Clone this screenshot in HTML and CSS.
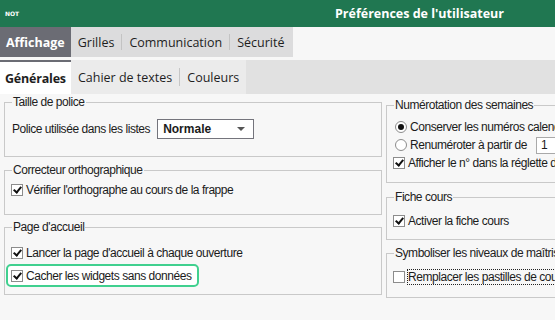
FILE: index.html
```html
<!DOCTYPE html>
<html lang="fr">
<head>
  <meta charset="UTF-8">
  <meta name="viewport" content="width=device-width, initial-scale=1.0">
  <title>Préférences de l'utilisateur</title>
  <link rel="stylesheet" href="styles.css">
</head>
<body>
  <header class="titlebar">
    <span class="logo">NOT</span>
    <h1 class="title">Préférences de l'utilisateur</h1>
  </header>

  <nav class="tabs main-tabs">
    <span class="tab active">Affichage</span>
    <span class="tab">Grilles</span>
    <span class="sep"></span>
    <span class="tab">Communication</span>
    <span class="sep"></span>
    <span class="tab">Sécurité</span>
  </nav>

  <nav class="tabs sub-tabs">
    <span class="tab active">Générales</span>
    <span class="tab">Cahier de textes</span>
    <span class="sep"></span>
    <span class="tab">Couleurs</span>
  </nav>

  <main class="panes">
    <div class="column left">
      <fieldset class="group g-font">
        <legend>Taille de police</legend>
        <div class="row">
          <span>Police utilisée dans les listes</span>
          <div class="select">Normale<span class="caret"></span></div>
        </div>
      </fieldset>

      <fieldset class="group g-spell">
        <legend>Correcteur orthographique</legend>
        <div class="row"><span class="check on"></span>Vérifier l'orthographe au cours de la frappe</div>
      </fieldset>

      <fieldset class="group g-home">
        <legend>Page d'accueil</legend>
        <div class="row tall"><span class="check on"></span>Lancer la page d'accueil à chaque ouverture</div>
        <div class="row tall highlight"><span class="check on"></span>Cacher les widgets sans données</div>
      </fieldset>
    </div>

    <div class="column right">
      <fieldset class="group g-weeks">
        <legend>Numérotation des semaines</legend>
        <div class="row"><span class="radio on"></span>Conserver les numéros calendaires</div>
        <div class="row"><span class="radio"></span>Renuméroter à partir de<span class="input">1</span></div>
        <div class="row"><span class="check on"></span>Afficher le n° dans la réglette du planning</div>
      </fieldset>

      <fieldset class="group g-card">
        <legend>Fiche cours</legend>
        <div class="row"><span class="check on"></span>Activer la fiche cours</div>
      </fieldset>

      <fieldset class="group g-levels">
        <legend>Symboliser les niveaux de maîtrise</legend>
        <div class="row"><span class="check"></span><span class="focus">Remplacer les pastilles de couleur par des symboles</span></div>
      </fieldset>
    </div>
  </main>
</body>
</html>
```

FILE: styles.css
```css
body {
  margin: 0;
  width: 555px;
  height: 320px;
  overflow: hidden;
  background-color: #f7f7f7;
  font-family: "Liberation Sans", Arial, sans-serif;
  font-size: 12px;
  letter-spacing: -0.45px;
  color: #1b1b1b;
}

/* barre de titre */
.titlebar {
  display: flex;
  align-items: center;
  height: 27px;
  padding-left: 5px;
  background-color: #207751;
  color: #fff;
}
.logo {
  font-family: "DejaVu Sans", sans-serif;
  font-size: 6px;
  font-weight: bold;
  letter-spacing: 0;
  width: 12px;
}
.title {
  margin: 0 0 0 318px;
  font-family: "Open Sans", sans-serif;
  font-size: 12.5px;
  font-weight: bold;
  letter-spacing: 0;
}

/* onglets */
.tabs {
  display: flex;
  align-items: center;
  font-family: "Open Sans", sans-serif;
  font-size: 12.5px;
  letter-spacing: 0;
  color: #1e1e1e;
}
.main-tabs {
  height: 30px;
  width: 293px;
  background-color: #dcdcdd;
}
.sub-tabs {
  height: 34px;
  margin-top: 3px;
  background-color: #e1e1e1;
}
.tab {
  display: flex;
  align-items: center;
  height: 100%;
  padding: 0 7px;
  box-sizing: border-box;
}
.main-tabs .tab.active {
  background-color: #6b6c74;
  color: #fff;
  font-weight: bold;
  padding: 0 6px;
}
.sub-tabs .tab {
  background-color: #ebebeb;
}
.sub-tabs .tab.active {
  background-color: #fff;
  border-top: 2px solid #6b6c74;
  font-weight: bold;
  padding: 0 5px 0 5px;
  letter-spacing: -0.2px;
}
.sep {
  width: 1px;
  height: 16px;
  background-color: #c3c3c3;
  flex: none;
}
.sub-tabs .sep {
  height: 100%;
  background: linear-gradient(#ebebeb 8px, #c6c6c6 8px, #c6c6c6 26px, #ebebeb 26px);
}

/* panneaux */
.panes {
  display: grid;
  grid-template-columns: 378px 260px;
  column-gap: 4px;
  padding: 1px 0 0 4px;
}
.column {
  display: flex;
  flex-direction: column;
}
.right {
  padding-top: 3px;
}
.group {
  box-sizing: border-box;
  margin: 0;
  padding: 0 7px;
  min-width: 0;
  border: 1px solid #c9c9c9;
}
.group legend {
  padding: 0 1px;
  color: #222;
}
.g-font { height: 62px; padding-top: 10px; }
.g-spell { height: 52px; margin-top: 6px; padding-top: 4px; }
.g-home { height: 75px; margin-top: 5px; padding-top: 7px; }
.g-weeks { height: 85px; padding-top: 6px; }
.g-card { height: 50px; margin-top: 7px; padding-top: 8px; }
.g-levels { height: 52px; margin-top: 6px; padding-top: 8px; }

.row {
  display: flex;
  align-items: center;
  height: 18px;
  white-space: nowrap;
}
.g-font .row { height: 20px; }
.row.tall { height: 23px; }

.select {
  display: flex;
  align-items: center;
  justify-content: space-between;
  box-sizing: border-box;
  width: 97px;
  height: 20px;
  margin-left: 7px;
  padding: 0 8px 0 5px;
  background-color: #fff;
  border: 1px solid #74747c;
  font-weight: bold;
  letter-spacing: 0;
}
.caret {
  width: 0;
  height: 0;
  border-left: 4px solid transparent;
  border-right: 4px solid transparent;
  border-top: 4px solid #555;
}

.check, .radio {
  box-sizing: border-box;
  flex: none;
  width: 12px;
  height: 12px;
  margin: 0 3px 0 -1px;
  background-color: #fff;
  border: 1px solid #8c8c8c;
  display: flex;
  align-items: center;
  justify-content: center;
}
.check.on::after {
  content: "";
  width: 3px;
  height: 6px;
  margin-top: -2px;
  border: solid #111;
  border-width: 0 2px 2px 0;
  transform: rotate(40deg);
}
.radio {
  border-radius: 50%;
  margin-left: 1px;
}
.radio.on::after {
  content: "";
  width: 6px;
  height: 6px;
  border-radius: 50%;
  background-color: #111;
}
.input {
  box-sizing: border-box;
  width: 60px;
  height: 17px;
  margin-left: 9px;
  padding-left: 4px;
  background-color: #fff;
  border: 1px solid #a9a9a9;
  line-height: 15px;
}

.highlight {
  width: fit-content;
  box-sizing: border-box;
  height: 24px;
  margin-left: -6px;
  padding: 0 5px 0 4px;
  background-color: #fff;
  border: 2px solid #40d08f;
  border-radius: 5px;
}
.focus {
  outline: 1px dotted #222;
  outline-offset: 0;
}
```
